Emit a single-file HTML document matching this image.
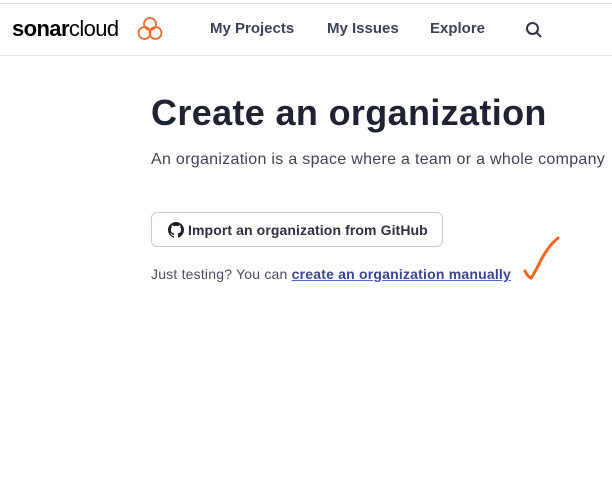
<!DOCTYPE html>
<html><head><style>
body{margin:0;width:612px;height:479px;background:#fff;font-family:"Liberation Sans",sans-serif;overflow:hidden;position:relative;color:#1c1f2b}
.top{position:absolute;top:3px;left:0;width:612px;height:1px;background:#e2e2e2}
.bar{position:absolute;top:55px;left:0;width:612px;height:1px;background:#e2e2e2}
.logo{position:absolute;left:12px;top:16px;font-size:22px;letter-spacing:-0.6px;color:#000}
.nav{position:absolute;top:20px;font-size:15px;font-weight:bold;color:#3b4358}
h1{position:absolute;left:151px;top:92px;margin:0;font-size:36px;font-weight:bold;color:#1f2230;letter-spacing:0.35px}
.sub{position:absolute;left:151px;top:151px;font-size:16px;color:#3e4357;white-space:nowrap;letter-spacing:0.3px}
.btn{position:absolute;left:151px;top:212px;width:292px;height:35px;border:1px solid #c5cad8;border-radius:6px;box-sizing:border-box}
.btn span{position:absolute;left:36px;top:9px;font-size:14px;font-weight:bold;color:#2c3040;letter-spacing:0.1px}
.just{position:absolute;left:151px;top:266px;font-size:14px;color:#4a4f62;letter-spacing:0.2px}
.just a{color:#3a4690;font-weight:bold;text-decoration:underline;text-decoration-color:#5566dd}
</style></head><body>
<div class="top"></div>
<div class="logo"><b>sonar</b>cloud</div>
<svg style="position:absolute;left:137px;top:16px" width="26" height="26" viewBox="0 0 26 26" fill="none" stroke="#f26b2b" stroke-width="1.8"><circle cx="13" cy="8" r="6"/><circle cx="7.5" cy="17" r="6"/><circle cx="18.5" cy="17" r="6"/></svg>
<div class="nav" style="left:210px">My Projects</div>
<div class="nav" style="left:327px">My Issues</div>
<div class="nav" style="left:430px">Explore</div>
<svg style="position:absolute;left:525px;top:21px" width="18" height="18" viewBox="0 0 18 18" fill="none" stroke="#2f3446" stroke-width="2"><circle cx="7.5" cy="7.5" r="5.5"/><path d="M11.5 11.5L16 16"/></svg>
<div class="bar"></div>
<h1>Create an organization</h1>
<div class="sub">An organization is a space where a team or a whole company</div>
<div class="btn"><svg style="position:absolute;left:16px;top:9px" width="16" height="16" viewBox="0 0 16 16"><path fill="#1c1f2b" d="M8 0C3.58 0 0 3.58 0 8c0 3.540 2.29 6.530 5.470 7.590.4.07.55-.17.55-.38v-1.33c-2.23.48-2.7-1.07-2.7-1.070-.36-.92-.89-1.17-.89-1.17-.73-.5.06-.49.06-.49.8.06 1.23.83 1.23.83.71 1.23 1.870.87 2.330.66.07-.52.28-.87.51-1.07-1.78-.2-3.64-.89-3.64-3.950 0-.87.31-1.59.82-2.15-.08-.2-.36-1.02.08-2.12 0 0 .67-.21 2.2.82A7.6 7.6 0 0 1 8 3.87c.68 0 1.36.09 2 .27 1.53-1.04 2.2-.82 2.2-.82.44 1.1.16 1.92.08 2.12.51.56.82 1.27.82 2.15 0 3.07-1.87 3.75-3.65 3.95.29.25.54.73.54 1.48v2.2c0 .21.15.46.55.38A8 8 0 0 0 16 8c0-4.42-3.580-8-8-8z"/></svg><span>Import an organization from GitHub</span></div>
<div class="just">Just testing? You can <a>create an organization manually</a></div>
<svg style="position:absolute;left:520px;top:234px" width="45" height="50" viewBox="0 0 45 50" fill="none" stroke="#f5611e" stroke-width="3" stroke-linecap="round"><path d="M5 37Q8 43 11 44Q14 40 20 28Q28 12 38 4"/></svg>
</body></html>
